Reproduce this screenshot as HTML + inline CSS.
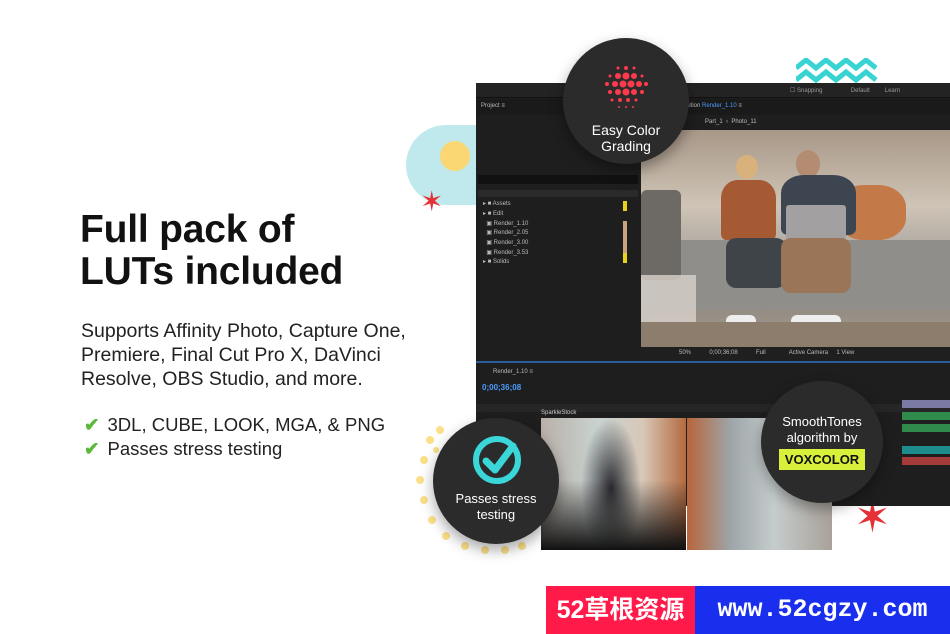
<!DOCTYPE html>
<html><head><meta charset="utf-8"><style>
*{margin:0;padding:0;box-sizing:border-box}
body{width:950px;height:634px;background:#fff;position:relative;overflow:hidden;font-family:"Liberation Sans",sans-serif}
.a{position:absolute}
h1{position:absolute;left:80px;top:209px;font-size:39px;line-height:42px;font-weight:bold;color:#111;letter-spacing:-0.2px}
.p{left:81px;top:319px;font-size:19.5px;line-height:24px;color:#222}
.c{left:84px;font-size:18.5px;color:#222}
.c b{color:#5cb83a;font-weight:bold;margin-right:8px}
.circ{position:absolute;border-radius:50%;background:#2b2b2b;box-shadow:0 6px 14px rgba(0,0,0,.35);color:#fff;text-align:center;font-size:14px;line-height:16px}
.row{position:absolute;left:483px;font-size:6px;color:#bbb}
</style></head><body>
<div class="a" style="left:406px;top:125px;width:70px;height:80px;background:#bfe9ec;border-radius:40px 0 0 40px"></div>
<div class="a" style="left:440px;top:141px;width:30px;height:30px;background:#fbd773;border-radius:50%"></div>
<div class="a" style="left:420px;top:188px;color:#e53035;font-size:28px;line-height:28px">✶</div>
<svg class="a" style="left:796px;top:58px" width="84" height="30"><polyline points="0,10 10,2 20,10 30,2 40,10 50,2 60,10 70,2 80,10" fill="none" stroke="#38d4d4" stroke-width="5"/><polyline points="0,22 10,14 20,22 30,14 40,22 50,14 60,22 70,14 80,22" fill="none" stroke="#38d4d4" stroke-width="5"/></svg>
<svg class="a" style="left:410px;top:410px" width="130" height="150"><g fill="#fbe08a">
<circle cx="20" cy="30" r="4"/><circle cx="14" cy="50" r="4"/><circle cx="10" cy="70" r="4"/><circle cx="14" cy="90" r="4"/><circle cx="22" cy="110" r="4"/><circle cx="36" cy="126" r="4"/><circle cx="55" cy="136" r="4"/><circle cx="75" cy="140" r="4"/><circle cx="95" cy="140" r="4"/><circle cx="112" cy="136" r="4"/><circle cx="30" cy="20" r="4"/><circle cx="26" cy="40" r="3"/></g></svg>
<div class="a" style="left:854px;top:496px;color:#e53035;font-size:44px;line-height:44px">✶</div>

<h1>Full pack of<br>LUTs included</h1>
<div class="a p">Supports Affinity Photo, Capture One,<br>Premiere, Final Cut Pro X, DaVinci<br>Resolve, OBS Studio, and more.</div>
<div class="a c" style="top:414px"><b>✔</b>3DL, CUBE, LOOK, MGA, &amp; PNG</div>
<div class="a c" style="top:438px"><b>✔</b>Passes stress testing</div>

<div class="a" style="left:476px;top:83px;width:474px;height:423px;background:#1e1e1e"></div>
<div class="a" style="left:476px;top:83px;width:474px;height:15px;background:#232323;border-bottom:1px solid #111"></div>
<div class="a" style="left:476px;top:99px;width:474px;height:16px;background:#1a1a1a"></div>
<div class="a" style="left:481px;top:103px;font-size:6px;color:#bbb">Project ≡</div>
<div class="a" style="left:683px;top:103px;font-size:6px;color:#bbb">osition <span style="color:#4a9dff">Render_1.10</span> ≡</div>
<div class="a" style="left:705px;top:119px;font-size:6px;color:#bbb">Part_1 &nbsp;‹&nbsp; Photo_11</div>
<div class="a" style="left:790px;top:87px;font-size:6px;color:#999">☐ Snapping &nbsp;&nbsp;&nbsp;&nbsp;&nbsp;&nbsp;&nbsp;&nbsp;&nbsp;&nbsp;&nbsp;&nbsp;&nbsp;&nbsp;&nbsp; Default &nbsp;&nbsp;&nbsp;&nbsp;&nbsp;&nbsp;&nbsp; Learn</div>
<div class="a" style="left:478px;top:175px;width:160px;height:9px;background:#111"></div>
<div class="a" style="left:478px;top:190px;width:160px;height:7px;background:#2a2a2a"></div>
<div class="row" style="top:200px">▸ ■ Assets</div>
<div class="row" style="top:210px">▸ ■ Edit</div>
<div class="row" style="top:220px">&nbsp;&nbsp;▣ Render_1.10</div>
<div class="row" style="top:229px">&nbsp;&nbsp;▣ Render_2.05</div>
<div class="row" style="top:239px">&nbsp;&nbsp;▣ Render_3.00</div>
<div class="row" style="top:249px">&nbsp;&nbsp;▣ Render_3.53</div>
<div class="row" style="top:258px">▸ ■ Solids</div>
<div class="a" style="left:623px;top:201px;width:4px;height:62px;background:linear-gradient(#e8d21a 0 16%,transparent 16% 32%,#c9a37a 32% 84%,#e8d21a 84%)"></div>
<!-- photo -->
<div class="a" style="left:641px;top:130px;width:309px;height:217px;overflow:hidden;background:linear-gradient(#a89888 0%,#cfc4b6 35%,#a5a29c 60%,#8f8a83 80%,#a99c8c 100%)">
<div class="a" style="left:0;top:110px;width:309px;height:70px;background:#8f8e8a"></div>
<div class="a" style="left:0;top:60px;width:40px;height:90px;background:#6d6a66;border-radius:6px"></div>
<div class="a" style="left:195px;top:55px;width:70px;height:55px;background:#c47a48;border-radius:40%"></div>
<div class="a" style="left:95px;top:25px;width:22px;height:24px;background:#d9b17c;border-radius:50%"></div>
<div class="a" style="left:80px;top:50px;width:55px;height:60px;background:#a55a34;border-radius:30% 30% 10% 10%"></div>
<div class="a" style="left:85px;top:108px;width:60px;height:50px;background:#3f4448;border-radius:10px"></div>
<div class="a" style="left:155px;top:20px;width:24px;height:28px;background:#b48c72;border-radius:50%"></div>
<div class="a" style="left:140px;top:45px;width:75px;height:60px;background:#3d4550;border-radius:30% 30% 10% 10%"></div>
<div class="a" style="left:145px;top:75px;width:60px;height:35px;background:#a2a0a0;border-radius:3px"></div>
<div class="a" style="left:140px;top:108px;width:70px;height:55px;background:#9a7558;border-radius:10px"></div>
<div class="a" style="left:85px;top:185px;width:30px;height:14px;background:#eee;border-radius:6px"></div>
<div class="a" style="left:150px;top:185px;width:50px;height:14px;background:#eee;border-radius:6px"></div>
<div class="a" style="left:0;top:145px;width:55px;height:72px;background:#d8d2ca;opacity:.8"></div>
<div class="a" style="left:0;top:192px;width:309px;height:25px;background:#8d7d6c"></div>
</div>
<div class="a" style="left:641px;top:347px;width:309px;height:13px;background:#1f1f1f"></div>
<div class="a" style="left:679px;top:350px;font-size:6px;color:#bbb">50% &nbsp;&nbsp;&nbsp;&nbsp;&nbsp;&nbsp;&nbsp;&nbsp;&nbsp; 0;00;36;08 &nbsp;&nbsp;&nbsp;&nbsp;&nbsp;&nbsp;&nbsp;&nbsp;&nbsp; Full &nbsp;&nbsp;&nbsp;&nbsp;&nbsp;&nbsp;&nbsp;&nbsp;&nbsp;&nbsp;&nbsp;&nbsp; Active Camera &nbsp;&nbsp;&nbsp; 1 View</div>
<div class="a" style="left:476px;top:361px;width:474px;height:2px;background:#2a5d9a"></div>
<div class="a" style="left:493px;top:369px;font-size:6px;color:#bbb">Render_1.10 ≡</div>
<div class="a" style="left:482px;top:383px;font-size:8px;color:#4a9dff;font-weight:bold">0;00;36;08</div>
<div class="a" style="left:476px;top:404px;width:474px;height:8px;background:#262626"></div>
<div class="a" style="left:541px;top:410px;font-size:6px;color:#ccc">SparkleStock</div>
<div class="a" style="left:902px;top:400px;width:48px;height:8px;background:#7b7aa5"></div>
<div class="a" style="left:902px;top:412px;width:48px;height:8px;background:#2f8a4c"></div>
<div class="a" style="left:902px;top:424px;width:48px;height:8px;background:#2f8a4c"></div>
<div class="a" style="left:902px;top:446px;width:48px;height:8px;background:#1f8c8c"></div>
<div class="a" style="left:902px;top:457px;width:48px;height:8px;background:#a53a3a"></div>
<div class="a" style="left:541px;top:418px;width:145px;height:132px;background:radial-gradient(ellipse 30px 70px at 70px 70px,#2a2a30,transparent),linear-gradient(90deg,#b9b0a8,#c9d3d1 40%,#d8c8b8 70%,#b46a3f)"></div>
<div class="a" style="left:541px;top:480px;width:145px;height:70px;background:linear-gradient(transparent,#111)"></div>
<div class="a" style="left:687px;top:418px;width:145px;height:132px;background:linear-gradient(90deg,#b8653a,#9ea5a8 30%,#c5cccc 60%,#a9a19a 100%)"></div>
<div class="circ" style="left:563px;top:38px;width:126px;height:126px">
<svg style="position:absolute;left:40px;top:26px" width="46" height="46"><g fill="#ff3a4c">
<circle cx="23" cy="4" r="2"/><circle cx="15" cy="4" r="1.5"/><circle cx="31" cy="4" r="1.5"/>
<circle cx="7" cy="12" r="1.5"/><circle cx="15" cy="12" r="3"/><circle cx="23" cy="12" r="3.5"/><circle cx="31" cy="12" r="3"/><circle cx="39" cy="12" r="1.5"/>
<circle cx="4" cy="20" r="2"/><circle cx="12" cy="20" r="3"/><circle cx="20" cy="20" r="3.5"/><circle cx="28" cy="20" r="3.5"/><circle cx="36" cy="20" r="3"/><circle cx="43" cy="20" r="2"/>
<circle cx="7" cy="28" r="2"/><circle cx="15" cy="28" r="3"/><circle cx="23" cy="28" r="3.5"/><circle cx="31" cy="28" r="3"/><circle cx="39" cy="28" r="2"/>
<circle cx="9" cy="36" r="1.5"/><circle cx="17" cy="36" r="2"/><circle cx="25" cy="36" r="2"/><circle cx="33" cy="36" r="1.5"/>
<circle cx="16" cy="43" r="1"/><circle cx="23" cy="43" r="1"/><circle cx="30" cy="43" r="1"/></g></svg>
<div style="position:absolute;left:0;right:0;top:84px">Easy Color<br>Grading</div></div>
<div class="circ" style="left:433px;top:418px;width:126px;height:126px">
<svg style="position:absolute;left:38px;top:16px" width="52" height="52"><circle cx="26" cy="26" r="21" fill="none" stroke="#3bd6d8" stroke-width="6"/><polyline points="15,27 24,36 42,12" fill="none" stroke="#3bd6d8" stroke-width="7" stroke-linecap="round" stroke-linejoin="round"/></svg>
<div style="position:absolute;left:0;right:0;top:73px;font-size:13px">Passes stress<br>testing</div></div>
<div class="circ" style="left:761px;top:381px;width:122px;height:122px">
<div style="position:absolute;left:0;right:0;top:33px;font-size:13px">SmoothTones<br>algorithm by</div>
<div style="position:absolute;left:18px;top:68px;width:86px;height:21px;background:#d8f03a;color:#111;font-weight:bold;font-size:13px;line-height:21px">VOXCOLOR</div></div>
<div class="a" style="left:546px;top:586px;width:149px;height:48px;background:#ff1a4a;color:#fff;font:bold 25px/48px 'Liberation Sans','Noto Sans CJK SC',sans-serif;text-align:center">52草根资源</div>
<div class="a" style="left:695px;top:586px;width:255px;height:48px;background:#1a2fee;color:#fff;font:bold 25px/48px 'Liberation Mono',monospace;text-align:center">www.52cgzy.com</div>
</body></html>
